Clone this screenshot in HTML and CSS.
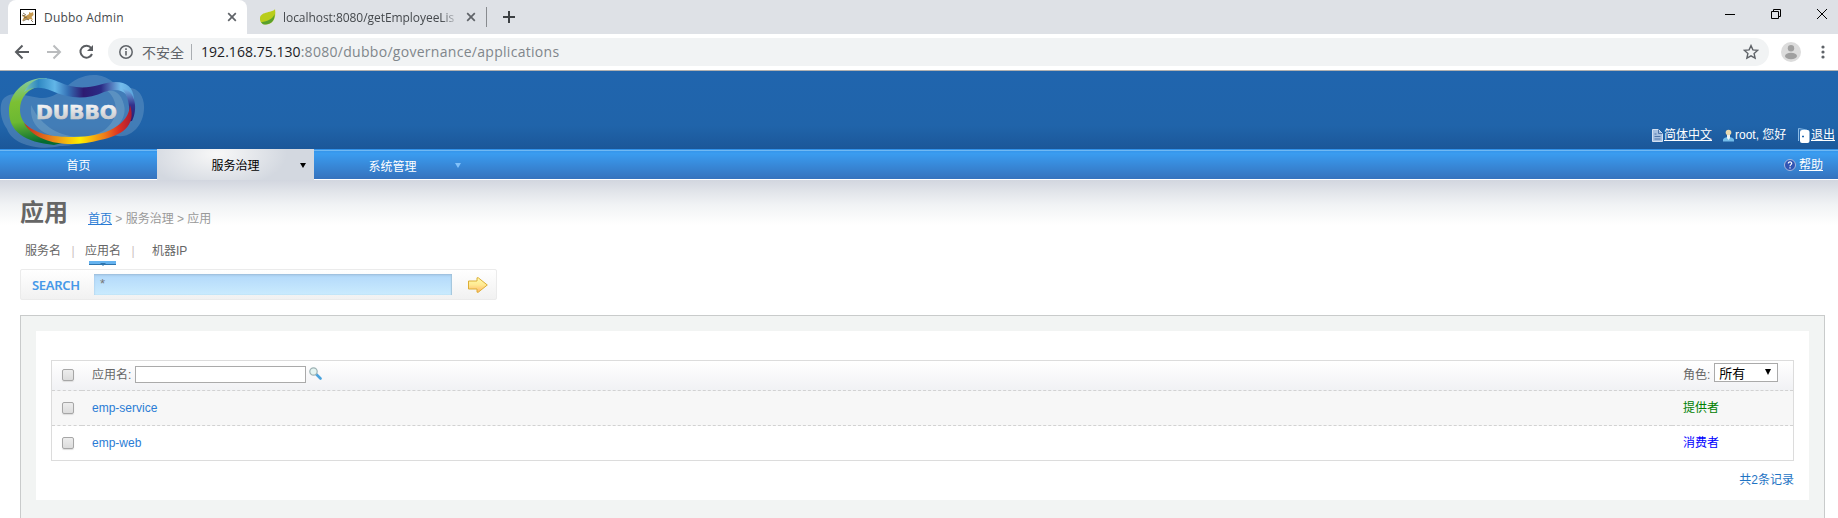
FILE: index.html
```html
<!DOCTYPE html>
<html lang="zh-CN">
<head>
<meta charset="utf-8">
<title>Dubbo Admin</title>
<link rel="stylesheet" href="styles.css">
</head>
<body>
<div class="tabstrip">
  <div class="tab active-tab">
    <svg class="favicon" width="16" height="16" viewBox="0 0 16 16"><rect x=".5" y=".5" width="15" height="15" fill="#fff" stroke="#000"/><path d="M2 12l2-4-2-1 2-1 2 1 3-2V3l2 1 2-1 .5 3-2 2 1.500 3-3-1-2 1-2-1z" fill="#c79a50"/><path d="M3 12l4-2 2 1M3 4l3 2M2 6l3 1M11 11l2 2M4 9l3-1" stroke="#6b5b3d" stroke-width=".8" fill="none"/></svg>
    <span class="tab-title">Dubbo Admin</span>
    <svg class="close" width="10" height="10" viewBox="0 0 10 10"><path d="M1.200 1.200l7.600 7.600M8.800 1.200L1.200 8.800" stroke="#5f6368" stroke-width="1.700"/></svg>
  </div>
  <div class="tab">
    <svg class="favicon" width="18" height="18" viewBox="0 0 18 18"><path d="M16 1C14 5 2 3 1 10c-.4 3 1 5 3 6 7 2 14-3 12-15z" fill="#b9cd1b"/><path d="M15.500 6C14 11 9 13 2 14.300l2 1.900c6 1 12-2 11.500-10.200z" fill="#5aa02c"/></svg>
    <span class="tab-title faded">localhost:8080/getEmployeeLis</span>
    <svg class="close second" width="10" height="10" viewBox="0 0 10 10"><path d="M1.200 1.200l7.600 7.600M8.800 1.200L1.200 8.800" stroke="#5f6368" stroke-width="1.700"/></svg>
  </div>
  <i class="tab-sep"></i>
  <svg class="plus" width="12" height="12" viewBox="0 0 12 12"><path d="M6 0v12M0 6h12" stroke="#3c4043" stroke-width="2"/></svg>
  <svg class="win-buttons" width="104" height="12" viewBox="0 0 104 12" fill="none" stroke="#000"><path d="M1 6.500h10M47.500 3.500h7v7h-7zM49.500 3V1.500h7v7H55M93 1l10 10M103 1L93 11"/></svg>
</div>
<div class="toolbar">
  <svg class="nav-icons" width="82" height="20" viewBox="0 0 82 20" fill="none" stroke-width="2"><path d="M15 10H2M8.500 3.500L2 10l6.500 6.500" stroke="#5a5d61"/><path d="M33 10h13M39.500 3.500L46 10l-6.500 6.500" stroke="#babcbe"/><path d="M77.200 6A6 6 0 1 0 78 12" stroke="#5a5d61"/><path d="M79 3v6h-6z" fill="#5a5d61"/></svg>
  <div class="omnibox">
    <svg width="14" height="14" viewBox="0 0 14 14"><circle cx="7" cy="7" r="6.200" fill="none" stroke="#5f6368" stroke-width="1.500"/><path d="M7 6v4.500M7 3.300v1.600" stroke="#5f6368" stroke-width="1.600"/></svg>
    <span class="insecure">不安全</span><i class="url-sep"></i>
    <span class="url"><b>192.168.75.130</b>:8080/dubbo/governance/applications</span>
    <svg class="star" width="16" height="16" viewBox="0 0 16 16"><path d="M8 1.600l1.900 4.300 4.700.5-3.500 3.100 1 4.700L8 11.800l-4.100 2.400 1-4.700-3.500-3.100 4.700-.5z" fill="none" stroke="#5f6368" stroke-width="1.400"/></svg>
  </div>
  <svg class="avatar" width="20" height="20" viewBox="0 0 20 20"><circle cx="10" cy="10" r="10" fill="#dcdcdc"/><circle cx="10" cy="6.200" r="3.200" fill="#a0a0a0"/><ellipse cx="10" cy="14" rx="6" ry="3.300" fill="#a0a0a0"/></svg>
  <svg class="dots" width="4" height="14" viewBox="0 0 4 14" fill="#5f6368"><circle cx="2" cy="2" r="1.600"/><circle cx="2" cy="7" r="1.600"/><circle cx="2" cy="12" r="1.600"/></svg>
</div>
<header class="banner">
  <svg class="logo" width="146" height="78" viewBox="0 0 146 78">
    <defs>
      <linearGradient id="top" gradientUnits="userSpaceOnUse" x1="24" y1="0" x2="134" y2="0"><stop offset="0" stop-color="#7cc6b4"/><stop offset=".13" stop-color="#2f88c2"/><stop offset=".28" stop-color="#62b6e8"/><stop offset=".4" stop-color="#3470b5"/><stop offset=".54" stop-color="#2d1b72"/><stop offset=".7" stop-color="#2b2b85"/><stop offset=".88" stop-color="#74bdec"/><stop offset="1" stop-color="#5aa3dc"/></linearGradient>
      <linearGradient id="bottom" gradientUnits="userSpaceOnUse" x1="24" y1="0" x2="132" y2="0"><stop offset="0" stop-color="#c5281f"/><stop offset=".25" stop-color="#e8801c"/><stop offset=".52" stop-color="#ffee00"/><stop offset=".75" stop-color="#ee7a1a"/><stop offset=".88" stop-color="#dc3122"/><stop offset="1" stop-color="#a81b34"/></linearGradient>
      <linearGradient id="left" gradientUnits="userSpaceOnUse" x1="25" y1="6" x2="35" y2="72"><stop offset="0" stop-color="#83cbb0"/><stop offset=".35" stop-color="#7cc033"/><stop offset=".65" stop-color="#6cb832"/><stop offset="1" stop-color="#046b32"/></linearGradient>
      <linearGradient id="right" x1="0" y1="0" x2="0" y2="1"><stop offset="0" stop-color="#74bdec"/><stop offset=".5" stop-color="#33318c"/><stop offset="1" stop-color="#281d70"/></linearGradient>
      <linearGradient id="letters" x1="0" y1="0" x2="0" y2="1"><stop offset="0" stop-color="#fff"/><stop offset="1" stop-color="#bdbfc2"/></linearGradient>
    </defs>
    <path d="M2 30C8 19 22 24 40 27 62 29 68 4 94 4c15 0 21 10 28 14 14-5 23 6 22 20-1 20-17 31-30 26C98 60 84 76 60 75 40 80 12 74 7 58 1 50-1 38 2 30z" fill="#a7c5dd" fill-opacity=".26"/>
    <path d="M31 34C29 58 46 68 78 68c34 0 50-18 46-34-3-12-9-15-18-15 12 8 15 29-3 41-20 11-56 8-72-26z" fill="#a7d0dd" fill-opacity=".25"/>
    <path d="M43 7C22 8 9 24 9 40c0 21 16 31 45 34l8-2C36 66 20 54 20 39c0-13 8-22 22-24l5-8z" fill="url(#left)"/>
    <path d="M24 21C33 5 46 5 59 11c12 6 26 7 40 3 19-6 34-4 35 14l-3 8c-2-16-12-20-27-15-17 8-35 7-52-1-12-5-20-4-28 1z" fill="url(#top)"/>
    <path d="M122 17c14 2 16 22 10 33-1 0-2 0-3 1 1-17 0-24-7-34z" fill="url(#right)"/>
    <path d="M24 52c12 11 26 14 50 14 31 0 55-12 56-32 7 21-9 31-30 35-28 8-63 5-76-17z" fill="url(#bottom)"/>
    <text x="36" y="48" class="logo-text" textLength="81" lengthAdjust="spacingAndGlyphs" fill="url(#letters)" stroke="url(#letters)" stroke-width=".6">DUBBO</text>
  </svg>
  <div class="user-links">
    <svg width="11" height="13" viewBox="0 0 11 13"><path d="M.5.500h6l4 4v8H.500z" fill="#a5bfe0" stroke="#d3e0f1"/><path d="M6.500.500v4h4M2.500 5h2M2.500 7.500h6M2.500 10h6" stroke="#4d74a8" fill="none"/></svg>
    <a class="lang">简体中文</a>
    <svg width="11" height="13" viewBox="0 0 11 13"><path d="M0 12.500V11c0-2 3-3 5.500-3S11 9 11 11v1.500z" fill="#73bce9"/><path d="M4 6h3v3l-1.500 2L4 9z" fill="#e8f2f8"/><circle cx="5.500" cy="3.500" r="2.800" fill="#e9d9b0"/></svg>
    <span class="user">root, 您好</span>
    <svg width="12" height="17" viewBox="0 0 12 17"><path d="M.5 14V1.500L9 3v3" fill="#2869ad" stroke="#8abbe6"/><path d="M2 5q0-2 2-2h5.500q2 0 2 2v9q0 2-2 2H4q-2 0-2-2z" fill="#fff"/><path d="M4 9.500h2M5 8.500v2" stroke="#1f64ac"/></svg>
    <a>退出</a>
  </div>
</header>
<nav class="menu">
  <a class="item">首页</a>
  <a class="item current">服务治理<i class="caret"></i></a>
  <a class="item system">系统管理<i class="caret"></i></a>
  <div class="help"><svg width="12" height="12" viewBox="0 0 12 12"><circle cx="6" cy="6" r="5.500" fill="#3154b4" stroke="#a9b8dd"/><path d="M4.300 4.500C4.300 2.300 7.900 2.500 7.700 4.500 7.600 5.700 6 5.600 6 7.200M6 8.200v1.300" fill="none" stroke="#fff" stroke-width="1.200"/></svg><a>帮助</a></div>
</nav>
<main class="page">
  <div class="heading"><h1>应用</h1><div class="crumbs"><a>首页</a> &gt; 服务治理 &gt; 应用</div></div>
  <div class="views"><span>服务名</span><i>|</i><span class="selected">应用名</span><i>|</i><span class="last">机器IP</span></div>
  <div class="search"><strong>SEARCH</strong><div class="query">*</div>
    <svg width="20" height="16" viewBox="0 0 20 16"><defs><linearGradient id="go" x1="0" y1="0" x2="0" y2="1"><stop offset="0" stop-color="#fffcb0"/><stop offset=".5" stop-color="#ffe991"/><stop offset="1" stop-color="#ffb469"/></linearGradient></defs><path d="M.5 4h8.500V.800l1.300 0L19.300 8l-9 7.200H9V12H.500z" fill="url(#go)" stroke="#dcae35"/></svg>
  </div>
  <section class="panel"><div class="sheet">
    <div class="grid">
      <div class="row head"><div class="check"><i></i></div><div class="name">应用名: <input type="text"><svg width="13" height="13" viewBox="0 0 13 13"><path d="M7.500 7.500l4 4" stroke="#4aa3dd" stroke-width="2.600" stroke-linecap="round"/><circle cx="4.500" cy="4.500" r="3.700" fill="#e4f4f1" stroke="#9eb3b5" stroke-width="1.200"/></svg></div><div class="role">角色: <span class="select">所有<i></i></span></div></div>
      <div class="row odd"><div class="check"><i></i></div><div class="name"><a>emp-service</a></div><div class="role provider">提供者</div></div>
      <div class="row"><div class="check"><i></i></div><div class="name"><a>emp-web</a></div><div class="role consumer">消费者</div></div>
    </div>
    <div class="total">共2条记录</div>
  </div></section>
</main>
</body>
</html>
```
FILE: styles.css
```css
* { box-sizing: border-box; }
body { margin: 0; height: 518px; overflow: hidden; display: flex; flex-direction: column; background: #fff; color: #666; font: 12px/16px "Liberation Sans", "Noto Sans CJK SC", sans-serif; }
svg { flex: none; display: block; }
i { font-style: normal; }
.tabstrip { height: 34px; flex: none; display: flex; background: #dee1e6; padding-left: 8px; font: 12px/16px "Open Sans", sans-serif; color: #45494d; }
.tab { width: 239px; display: flex; align-items: center; padding: 0 8px 0 12px; }
.active-tab { background: #fff; border-radius: 8px 8px 0 0; }
.tab-title { width: 174px; margin: 2px 0 0 8px; white-space: nowrap; overflow: hidden; letter-spacing: .2px; }
.close { margin-left: 9px; }
.close.second { margin-left: 7px; }
.tab-title.faded { width: 176px; margin-left: 6px; letter-spacing: -.05px; -webkit-mask-image: linear-gradient(90deg, #000 90%, transparent); mask-image: linear-gradient(90deg, #000 90%, transparent); }
.tab-sep { width: 1px; height: 20px; background: #888b8f; margin-top: 7px; }
.plus { margin: 11px 0 0 16px; }
.win-buttons { margin: 8px 10px 0 auto; }
.toolbar { height: 37px; flex: none; display: flex; align-items: center; border-bottom: 1px solid #b1b1b1; }
.nav-icons { margin-left: 14px; }
.omnibox { width: 1661px; height: 28px; margin-left: 12px; background: #f1f3f4; border-radius: 14px; display: flex; align-items: center; padding: 0 10px 0 11px; }
.insecure { font: 14px/20px "Noto Sans CJK SC", sans-serif; margin-left: 9px; color: #5f6368; }
.url-sep { width: 1px; height: 16px; background: #aaaeb2; margin: 0 9px 0 7px; }
.url { font: 14px/20px "Open Sans", sans-serif; color: #80868b; letter-spacing: .29px; }
.url b { font-weight: 400; color: #202124; letter-spacing: .04px; }
.star { margin-left: auto; }
.avatar { margin-left: 12px; }
.dots { margin-left: 20px; }
.banner { height: 78px; flex: none; display: flex; justify-content: space-between; background: linear-gradient(#2065ae, #2064aa 70%, #1b5799); }
.user-links { display: flex; align-items: center; color: #fff; height: 20px; margin: 54px 3px 0 0; }
.user-links a, .help a { text-decoration: underline; }
.user-links svg { margin-right: 1px; }
.user-links a, .user-links span { white-space: nowrap; }
.lang { margin-right: 11px; }
.user { margin-right: 11px; width: 52px; }
.logo-text { font: bold 19px "DejaVu Sans", sans-serif; }
.menu { height: 31px; flex: none; display: flex; background: linear-gradient(#6fb8f3 0 0) 0 1px / 100% 1px no-repeat, linear-gradient(#3190e7, #3a9cf0 15%, #3572bd); border-bottom: 1px solid #fff; color: #fff; }
.item { width: 157px; height: 30px; display: flex; align-items: center; justify-content: center; position: relative; padding-top: 3px; }
.current { height: 31px; color: #000; background: radial-gradient(ellipse 70px 35px at 60px 5px, #f8f8f8, transparent), #d3d8e0; }
.system { padding-top: 5px; }
.caret { position: absolute; right: 8px; top: 14px; border: 3px solid transparent; border-top: 5px solid #000; border-bottom: 0; }
.system .caret { border-top-color: #82c2fa; right: 10px; }
.help { margin: 0 15px 0 auto; display: flex; align-items: center; gap: 3px; padding-top: 2px; }
.page { flex: 1; display: flex; flex-direction: column; background: linear-gradient(#d2d6df, #e2e5ea 12px, #f1f3f5 25px, #fff 45px); padding: 0 13px 0 20px; }
.heading { display: flex; height: 63px; padding-top: 15px; flex: none; }
h1 { margin: 0; font-size: 24px; line-height: 36px; width: 68px; }
.crumbs { color: #999; padding-top: 16px; }
.crumbs a { color: #2a7cd5; text-decoration: underline; }
.views { height: 26px; display: flex; padding-left: 5px; line-height: 16px; flex: none; }
.views i { width: 24px; text-align: center; color: #ccbfc0; }
.views .selected { position: relative; }
.selected::before { content: ""; position: absolute; left: 4px; top: 18px; width: 27px; height: 3px; background: #66b3ef; border-bottom: 1px solid #2e75ae; }
.selected::after { content: ""; position: absolute; left: 15px; top: 20px; border: 3px solid transparent; border-top: 3px solid #2e75ae; border-bottom: 0; }
.views .last { margin-left: 7px; }
.search { width: 477px; height: 31px; flex: none; border: 1px solid #ebebeb; border-radius: 2px; background: linear-gradient(#fff, #f1f1f1); display: flex; align-items: center; padding-left: 11px; }
.search strong { width: 62px; color: #4698e8; font: 600 13px/18px "Noto Sans", sans-serif; letter-spacing: -.3px; }
.query { width: 358px; height: 21px; background: linear-gradient(#aed4f4, #b7dcfb 20%, #caebfe); box-shadow: inset 0 1px 2px #9dbcda, inset -1px 0 1px #a7cadd; padding: 2px 6px; color: #777; font-size: 13px; }
.search svg { margin-left: 16px; }
.panel { flex: 1; margin-top: 15px; border: 1px solid #c9cbcb; border-bottom: 0; background: #f2f4f3; padding: 15px; }
.sheet { height: 169px; background: #fff; padding: 29px 15px 0; }
.grid { border: 1px solid #dcdcdc; height: 101px; }
.row { display: grid; grid-template-columns: 30px 1fr 121px; height: 34px; }
.row > div { display: flex; align-items: center; }
.head { height: 30px; background: linear-gradient(#fff, #f0f1f4); }
.odd { height: 35px; background: #f7f7f7; }
.head > div, .odd > div { border-bottom: 1px dashed #d2d2d2; }
.check { padding: 0 0 1px 10px; }
.check i { width: 12px; height: 12px; border: 1px solid #a6a6a6; border-radius: 2px; background: linear-gradient(#ededed, #dcdcdc); box-shadow: 0 1px 1px #ddd; }
.row .name { padding-left: 10px; }
.row .role { padding-left: 11px; }
.head .name, .head .role { padding-bottom: 2px; }
.head .name svg { margin-bottom: 3px; }
.row a { color: #2a7cd5; }
input { width: 171px; height: 17px; border: 1px solid #aaa; margin: 0 3px 0 4px; padding: 0; background: #fff; }
.select { width: 64px; height: 19px; border: 1px solid #aaa; background: #fff; color: #000; font-size: 13px; line-height: 20px; padding-left: 4px; margin: -4px 0 0 4px; display: flex; justify-content: space-between; }
.select i { border: 3px solid transparent; border-top: 6px solid #000; border-bottom: 0; margin: 5px 6px 0 0; height: 6px; }
.role.provider { color: #008000; }
.role.consumer { color: #00f; }
.total { text-align: right; color: #1f74c4; padding-top: 11px; }
```
